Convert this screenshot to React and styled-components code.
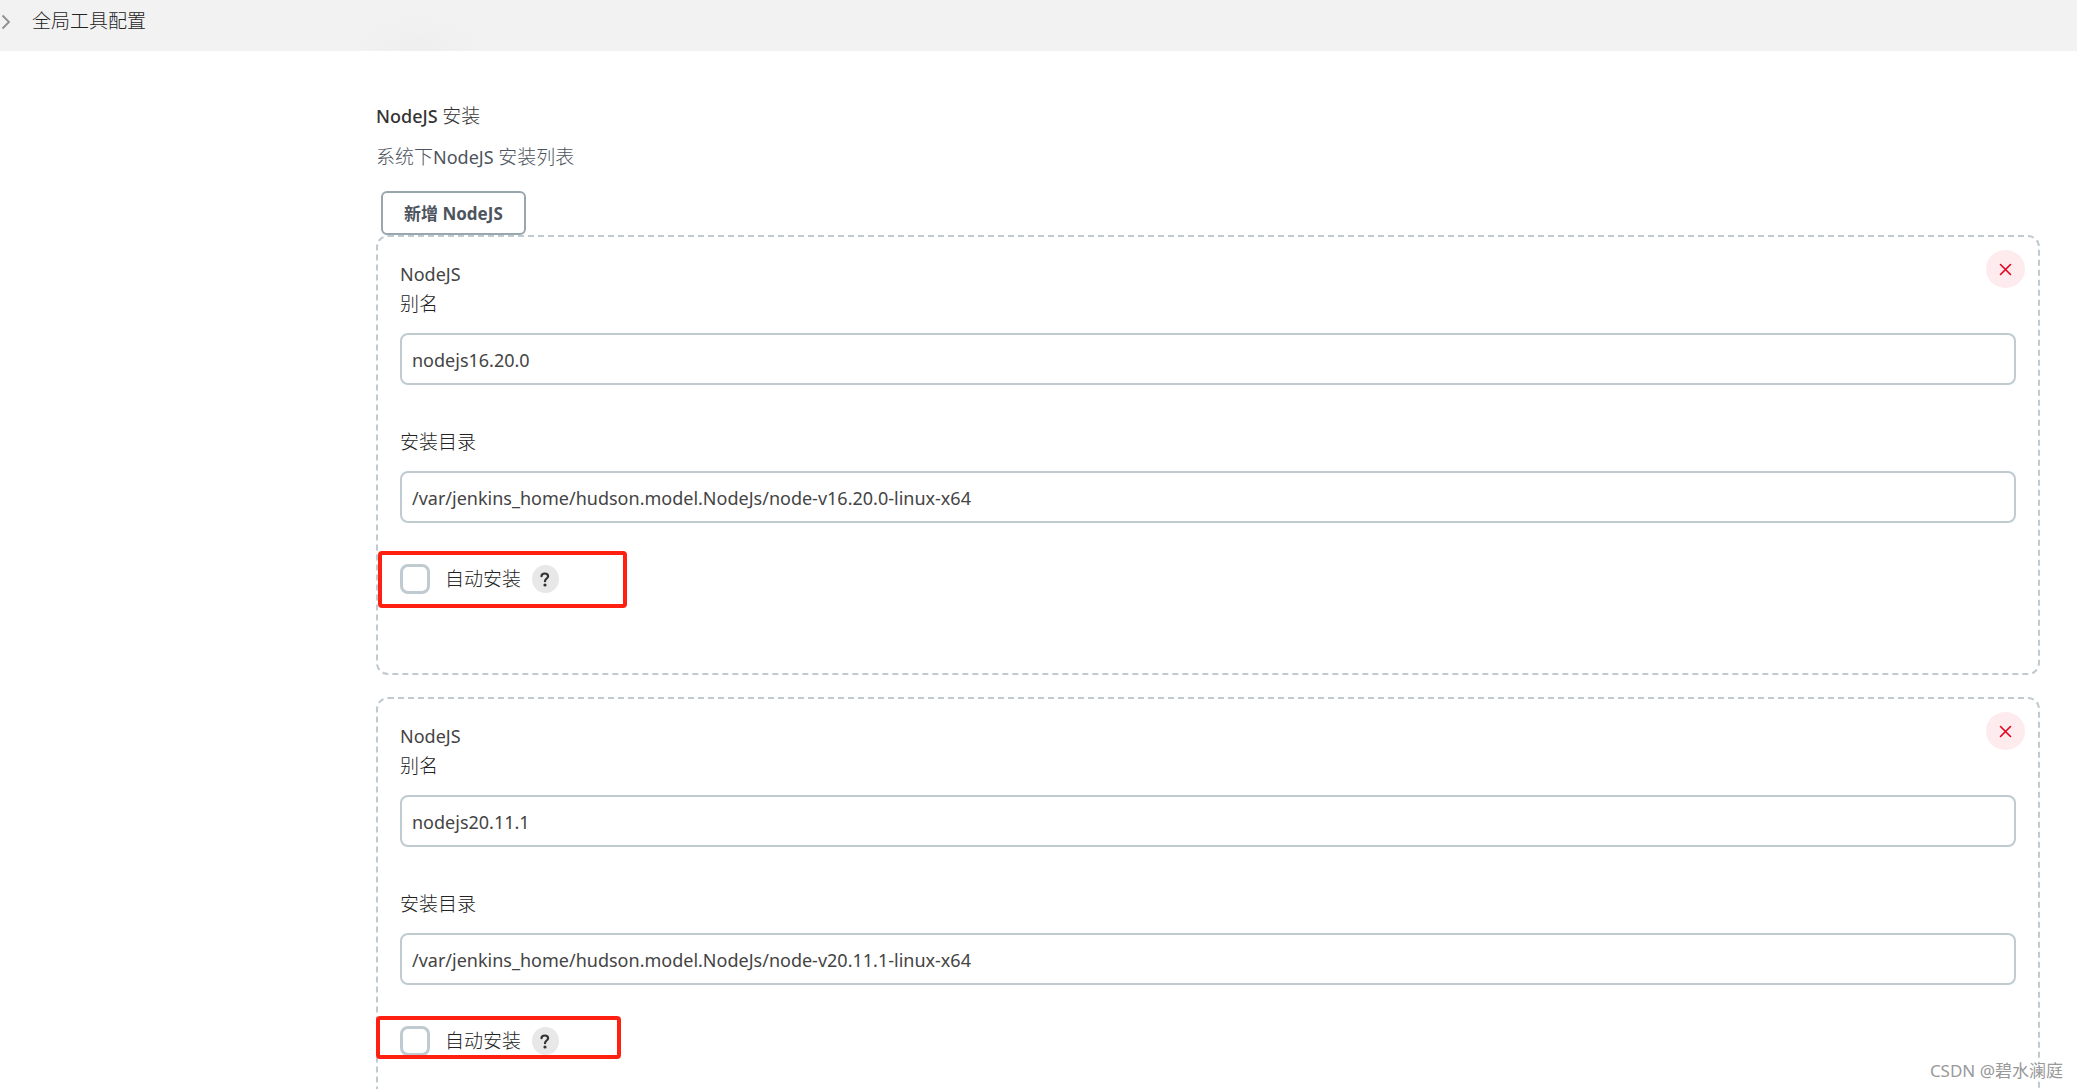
import React from 'react';
import styled, { createGlobalStyle } from 'styled-components';

const GlobalStyle = createGlobalStyle`
  *, *::before, *::after { box-sizing: border-box; }
  body {
    margin: 0;
    background: #fff;
    color: #444;
    font-family: "Noto Sans", "Noto Sans CJK SC", sans-serif;
    font-size: 19px;
    line-height: 29px;
  }
`;

const Page = styled.div`
  position: relative;
  height: 100vh;
  overflow: hidden;
`;

const Breadcrumbs = styled.nav`
  display: flex;
  align-items: center;
  gap: 21px;
  height: 51px;
  padding: 0 0 8px 1px;
  background:
    radial-gradient(64px 36px at 418px 51px, #eeeeee, #f2f2f2) no-repeat,
    #f2f2f2;
`;

const Crumb = styled.a`
  color: #222;
  font-weight: 300;
  text-decoration: none;
`;

const Main = styled.main`
  padding: 51px 37px 0 376px;
`;

const Heading = styled.h2`
  margin: 0;
  color: #333;
  font-size: 18px;
  line-height: 29px;
  font-weight: 500;
`;

const Light = styled.span`
  font-size: 19px;
  font-weight: 300;
`;

const Description = styled.p`
  margin: 12px 0 19px;
  color: #4d545d;
  font-size: 18px;
`;

const AddButton = styled.button`
  display: block;
  height: 44px;
  margin-left: 5px;
  padding: 1px 21px 0;
  border: 2px solid #98a6ad;
  border-radius: 6px;
  background: #fff;
  color: #4d545d;
  font: 700 17px/24px "Noto Sans", "Noto Sans CJK SC", sans-serif;
`;

const CardList = styled.div`
  display: flex;
  flex-direction: column;
  gap: 22px;
`;

const Card = styled.section`
  position: relative;
  height: 440px;
  padding: 23px 22px;
  border: 2px dashed #bfcbd0;
  border-radius: 12px;
`;

const CardTitle = styled.div`
  font-size: 18px;
`;

const Field = styled.div`
  display: flex;
  flex-direction: column;
  gap: 14px;
  margin-bottom: ${(p) => (p.$last ? 41 : 42)}px;
`;

const Label = styled.label`
  padding-top: 1px;
  color: #222;
  font-weight: 300;
`;

const TextInput = styled.input`
  width: 100%;
  height: 52px;
  padding: 2px 10px 0;
  border: 2px solid #bfcbd0;
  border-radius: 8px;
  outline: none;
  background: #fff;
  color: #444;
  font: 400 18px/29px "Noto Sans", "Noto Sans CJK SC", sans-serif;
`;

const CheckRow = styled.div`
  position: relative;
  display: flex;
  align-items: center;
  height: 30px;
`;

const Checkbox = styled.input`
  appearance: none;
  width: 30px;
  height: 30px;
  margin: 0 15px 0 0;
  border: 3px solid #bfcbd0;
  border-radius: 8px;
  background: #fff;
`;

const HelpButton = styled.button`
  display: flex;
  align-items: center;
  justify-content: center;
  width: 27px;
  height: 28px;
  margin-left: 11px;
  padding: 0 1px 0 0;
  border: 0;
  border-radius: 50%;
  background: #e8e8e8;
  color: #333;
`;

const DeleteButton = styled.button`
  position: absolute;
  top: 13px;
  right: 13px;
  display: flex;
  align-items: center;
  justify-content: center;
  width: 39px;
  height: 38px;
  padding: 0;
  border: 0;
  border-radius: 50%;
  background: #fdebed;
  color: #e6001f;
`;

const Highlight = styled.div`
  position: absolute;
  top: ${(p) => p.$top}px;
  left: ${(p) => p.$left}px;
  width: ${(p) => p.$width}px;
  height: ${(p) => p.$height}px;
  border: 4px solid #ff2012;
  border-radius: 4px;
  pointer-events: none;
`;

const Watermark = styled.div`
  position: absolute;
  right: 14px;
  bottom: 4px;
  color: #999;
  font-size: 17px;
  text-shadow: 1px 1px 0 #fff;
`;

const installations = [
  {
    id: 'a',
    name: 'nodejs16.20.0',
    home: '/var/jenkins_home/hudson.model.NodeJs/node-v16.20.0-linux-x64',
    mark: { $top: -13, $left: -22, $width: 249, $height: 57 },
  },
  {
    id: 'b',
    name: 'nodejs20.11.1',
    home: '/var/jenkins_home/hudson.model.NodeJs/node-v20.11.1-linux-x64',
    mark: { $top: -10, $left: -24, $width: 245, $height: 43 },
  },
];

function Installation({ id, name, home, mark }) {
  return (
    <Card>
      <CardTitle>NodeJS</CardTitle>
      <Field>
        <Label htmlFor={`name-${id}`}>别名</Label>
        <TextInput id={`name-${id}`} type="text" defaultValue={name} />
      </Field>
      <Field $last>
        <Label htmlFor={`home-${id}`}>安装目录</Label>
        <TextInput id={`home-${id}`} type="text" defaultValue={home} />
      </Field>
      <CheckRow>
        <Checkbox id={`auto-${id}`} type="checkbox" />
        <Label htmlFor={`auto-${id}`}>自动安装</Label>
        <HelpButton type="button">
          <svg width="10" height="15" viewBox="0 0 10 15" fill="none">
            <path d="M1.500 4.200C1.600 2.400 3 1.500 4.800 1.500c1.900 0 3.300 1 3.300 2.700 0 2.200-3.100 2.500-3.100 5" stroke="currentColor" strokeWidth="2.200" strokeLinecap="round" />
            <circle cx="5" cy="13" r="1.600" fill="currentColor" />
          </svg>
        </HelpButton>
        <Highlight {...mark} />
      </CheckRow>
      <DeleteButton type="button">
        <svg width="13" height="13" viewBox="0 0 13 13">
          <path d="M1.500 1.500l10 10M11.500 1.500l-10 10" stroke="currentColor" strokeWidth="1.600" strokeLinecap="round" />
        </svg>
      </DeleteButton>
    </Card>
  );
}

export default function App() {
  return (
    <Page>
      <GlobalStyle />
      <Breadcrumbs>
        <svg width="10" height="16" viewBox="0 0 10 16" fill="none">
          <path d="M1.500 1.500L8 8l-6.500 6.500" stroke="#8f8f8f" strokeWidth="1.800" />
        </svg>
        <Crumb href="#tools">全局工具配置</Crumb>
      </Breadcrumbs>
      <Main>
        <Heading>NodeJS <Light>安装</Light></Heading>
        <Description><Light>系统下</Light>NodeJS <Light>安装列表</Light></Description>
        <AddButton type="button">新增 NodeJS</AddButton>
        <CardList>
          {installations.map((item) => (
            <Installation key={item.id} {...item} />
          ))}
        </CardList>
      </Main>
      <Watermark>CSDN @碧水澜庭</Watermark>
    </Page>
  );
}
